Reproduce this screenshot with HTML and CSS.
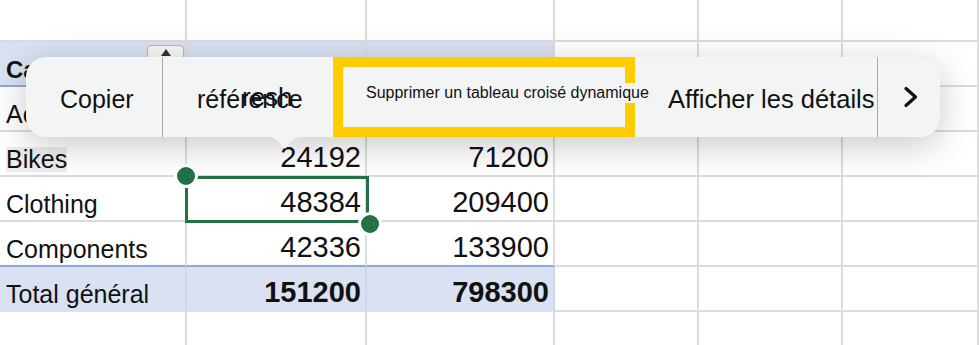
FILE: index.html
```html
<!DOCTYPE html>
<html lang="fr">
<head>
    <meta charset="UTF-8">
    <meta name="viewport" content="width=device-width, initial-scale=1.0">
    <title>Tableau croisé dynamique</title>
    <link rel="stylesheet" href="styles.css">
</head>
<body>
    <div class="sheet">
        <!-- row 1 -->
        <div class="cell"></div>
        <div class="cell"></div>
        <div class="cell"></div>
        <div class="cell"></div>
        <div class="cell"></div>
        <div class="cell"></div>

        <!-- pivot header -->
        <div class="cell head label">Catégorie<span class="filter"></span></div>
        <div class="cell head label">Somme de Quantité</div>
        <div class="cell head label">Somme de Montant</div>
        <div class="cell"></div>
        <div class="cell"></div>
        <div class="cell"></div>

        <div class="cell label">Accessories</div>
        <div class="cell num">36288</div>
        <div class="cell num">383800</div>
        <div class="cell"></div>
        <div class="cell"></div>
        <div class="cell"></div>

        <div class="cell label"><span class="mark">Bikes</span></div>
        <div class="cell num">24192</div>
        <div class="cell num">71200</div>
        <div class="cell"></div>
        <div class="cell"></div>
        <div class="cell"></div>

        <div class="cell label">Clothing</div>
        <div class="cell num">48384</div>
        <div class="cell num">209400</div>
        <div class="cell"></div>
        <div class="cell"></div>
        <div class="cell"></div>

        <div class="cell label last">Components</div>
        <div class="cell num last">42336</div>
        <div class="cell num last">133900</div>
        <div class="cell"></div>
        <div class="cell"></div>
        <div class="cell"></div>

        <div class="cell label total">Total général</div>
        <div class="cell num total">151200</div>
        <div class="cell num total">798300</div>
        <div class="cell"></div>
        <div class="cell"></div>
        <div class="cell"></div>

        <div class="cell"></div>
        <div class="cell"></div>
        <div class="cell"></div>
        <div class="cell"></div>
        <div class="cell"></div>
        <div class="cell"></div>

        <!-- selected cell -->
        <div class="selection"></div>
        <div class="handle handle-start"></div>
        <div class="handle handle-end"></div>

        <!-- context toolbar -->
        <div class="callout">
            <div class="action copy">Copier</div>
            <div class="sep"></div>
            <div class="action ref">référence<span class="ghost">resh</span></div>
            <div class="action remove"><span>Supprimer un tableau croisé dynamique</span></div>
            <div class="action details">Afficher les détails</div>
            <div class="sep"></div>
            <div class="action more">
                <svg width="15" height="22" viewBox="0 0 15 22">
                    <polyline points="3,2.5 12.5,11 3,19.5" fill="none" stroke="#111" stroke-width="3.2" stroke-linecap="round" stroke-linejoin="round"/>
                </svg>
            </div>
            <svg class="tail" width="44" height="16" viewBox="0 0 44 16">
                <path d="M0 0 C9 0 14 3 18 8 L20.5 11.5 Q22 13.5 23.5 11.5 L26 8 C30 3 35 0 44 0 Z" fill="#f3f4f4"/>
            </svg>
        </div>
    </div>
</body>
</html>
```

FILE: styles.css
```css
body {
    margin: 0;
    background-color: #fff;
    font-family: "Liberation Sans", Arial, sans-serif;
    color: #111;
    overflow: hidden;
}
.sheet {
    position: relative;
    display: grid;
    grid-template-columns: 187px 180px 188px 144px 144px 136px;
    grid-template-rows: 42px repeat(7, 45px);
    width: 979px;
    height: 345px;
    overflow: hidden;
}
.cell {
    box-sizing: border-box;
    display: flex;
    align-items: flex-end;
    border-right: 2px solid #dcdcdc;
    border-bottom: 2px solid #dcdcdc;
    padding-bottom: 3px;
    line-height: 1;
    white-space: nowrap;
    overflow: hidden;
}
.label {
    font-size: 25px;
    padding-left: 6px;
}
.num {
    justify-content: flex-end;
    font-size: 29px;
    padding-right: 4px;
}
.head {
    position: relative;
    overflow: visible;
    background-color: #d9e1f2;
    border-bottom-color: #8ea9db;
    font-weight: bold;
    font-size: 24px;
}
.last {
    border-bottom-color: #8ea9db;
}
.total {
    background-color: #d9e1f2;
    border-right-color: #cfd7e8;
    border-bottom-color: #d9e1f2;
}
.num.total {
    font-weight: bold;
}
.mark {
    background-color: #ededed;
}
.filter {
    position: absolute;
    left: 147px;
    top: 3px;
    width: 37px;
    height: 30px;
    box-sizing: border-box;
    border: 1px solid #b9b9b9;
    border-radius: 4px;
    background-color: #f6f6f6;
}
.filter::before {
    content: "";
    position: absolute;
    left: 13px;
    top: 3px;
    border-left: 5px solid transparent;
    border-right: 5px solid transparent;
    border-bottom: 7px solid #333;
}

/* selection */
.selection {
    position: absolute;
    left: 185px;
    top: 176px;
    width: 184px;
    height: 47px;
    box-sizing: border-box;
    border: 3px solid #217346;
}
.handle {
    position: absolute;
    width: 18px;
    height: 18px;
    border-radius: 50%;
    background-color: #217346;
    border: 3px solid #fff;
}
.handle-start {
    left: 174px;
    top: 164px;
}
.handle-end {
    left: 358px;
    top: 212px;
}

/* toolbar */
.callout {
    position: absolute;
    left: 26px;
    top: 57px;
    width: 914px;
    height: 80px;
    display: flex;
    background-color: #f3f4f4;
    border-radius: 20px;
    box-shadow: 0 8px 36px rgba(0, 0, 0, 0.22);
    font-size: 25px;
    color: #111;
}
.action {
    box-sizing: border-box;
    display: flex;
    align-items: center;
    padding-top: 4px;
    white-space: nowrap;
}
.sep {
    width: 1px;
    background-color: #a8a8a8;
}
.copy {
    width: 136px;
    padding-left: 34px;
}
.ref {
    position: relative;
    width: 170px;
    padding-left: 34px;
}
.ghost {
    position: absolute;
    left: 79px;
    top: 27px;
    font-size: 26px;
    line-height: 26px;
}
.remove {
    width: 302px;
    border: 10px solid #ffcc00;
    align-items: flex-start;
    padding-top: 16px;
    padding-left: 23px;
    font-size: 16px;
    line-height: 20px;
}
.remove span {
    background-color: #f3f4f4;
}
.details {
    width: 242px;
    padding-left: 33px;
    font-size: 25.5px;
}
.more {
    flex: 1;
    padding-top: 0;
    padding-left: 25px;
}
.tail {
    position: absolute;
    left: 237px;
    top: 79px;
}
```
